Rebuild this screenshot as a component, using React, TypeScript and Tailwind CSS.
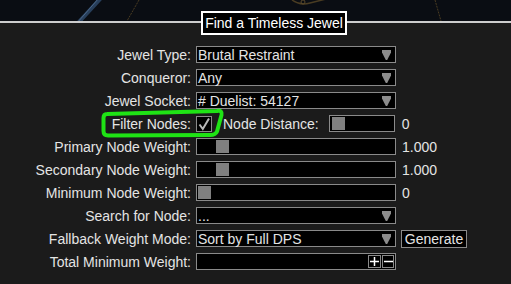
import React from "react";

const font = { fontFamily: '"Liberation Sans", Arial, sans-serif' };

function Arrow() {
  return (
    <svg className="h-[10px] w-[9px] shrink-0" viewBox="0 0 9 10">
      <path d="M0 0 H9 V2.5 L5.2 10 H3.8 L0 2.5 Z" fill="#8c8c8c" />
    </svg>
  );
}

function Label({ children }: { children: React.ReactNode }) {
  return (
    <div className="w-[192px] shrink-0 whitespace-nowrap pr-[1px] text-right leading-none">
      {children}
    </div>
  );
}

function Dropdown({ value }: { value: string }) {
  return (
    <div className="ml-[4px] flex h-[17px] w-[200px] items-center justify-between border border-[#8a8a8a] bg-black pl-[1px] pr-[4px]">
      <span className="whitespace-nowrap leading-none">{value}</span>
      <Arrow />
    </div>
  );
}

function Slider({ offset, width }: { offset: string; width: string }) {
  return (
    <div className={`flex h-[17px] items-center border border-[#8a8a8a] bg-black px-[1px] ${width}`}>
      <div className={`h-[13px] w-[13px] bg-[#808080] ${offset}`} />
    </div>
  );
}

function Row({ children }: { children: React.ReactNode }) {
  return <div className="flex h-[17px] items-center">{children}</div>;
}

export default function App() {
  return (
    <div
      className="relative h-[284px] w-[511px] overflow-hidden bg-[#1b1b1b] text-[14px] text-[#e4e4e4]"
      style={font}
    >
      {/* tree backdrop */}
      <div className="h-[21px] bg-[#0a0d13]">
        <svg className="h-full w-full" viewBox="0 0 511 21">
          <path d="M101 -2 L78 23" stroke="#35557a" strokeWidth="4" opacity="0.7" />
          <path d="M99 -2 L77 23" stroke="#6f8fb8" strokeWidth="1" opacity="0.5" />
          <path d="M139 0 L127 21" stroke="#4a3c22" strokeWidth="1" strokeDasharray="2 1" />
          <path d="M292 0 Q300 6 310 3 Q322 0 330 -2" stroke="#4a3c22" strokeWidth="1.5" fill="none" />
          <circle cx="303" cy="2" r="2" fill="none" stroke="#5a4a2a" strokeWidth="1" />
          <path d="M435 0 L441 21" stroke="#4a3c22" strokeWidth="1" strokeDasharray="2 1" />
        </svg>
      </div>
      <div className="h-[2px] bg-[#cdcdcd]" />

      <div className="absolute left-[201px] top-[11px] flex h-[24px] w-[146px] items-center justify-center border-2 border-white bg-black leading-none text-white">
        Find a Timeless Jewel
      </div>

      <div className="flex flex-col gap-[6px] pt-[23px]">
        <Row>
          <Label>Jewel Type:</Label>
          <Dropdown value="Brutal Restraint" />
        </Row>
        <Row>
          <Label>Conqueror:</Label>
          <Dropdown value="Any" />
        </Row>
        <Row>
          <Label>Jewel Socket:</Label>
          <Dropdown value="# Duelist: 54127" />
        </Row>
        <Row>
          <Label>Filter Nodes:</Label>
          <div className="ml-[4px] flex h-[16px] w-[16px] items-center justify-center border border-[#8a8a8a] bg-black">
            <svg className="h-[14px] w-[14px]" viewBox="0 0 14 14">
              <path d="M2.5 7.5 L5.8 12 L12 1.5" stroke="#b8b8b8" strokeWidth="2" fill="none" />
            </svg>
          </div>
          <span className="ml-[11px] whitespace-nowrap leading-none">Node Distance:</span>
          <div className="ml-[10px]">
            <Slider offset="ml-[1px]" width="w-[66px]" />
          </div>
          <span className="ml-[7px] leading-none">0</span>
        </Row>
        <Row>
          <Label>Primary Node Weight:</Label>
          <div className="ml-[4px]">
            <Slider offset="ml-[18px]" width="w-[200px]" />
          </div>
          <span className="ml-[6px] leading-none">1.000</span>
        </Row>
        <Row>
          <Label>Secondary Node Weight:</Label>
          <div className="ml-[4px]">
            <Slider offset="ml-[18px]" width="w-[200px]" />
          </div>
          <span className="ml-[6px] leading-none">1.000</span>
        </Row>
        <Row>
          <Label>Minimum Node Weight:</Label>
          <div className="ml-[4px]">
            <Slider offset="ml-0" width="w-[200px]" />
          </div>
          <span className="ml-[6px] leading-none">0</span>
        </Row>
        <Row>
          <Label>Search for Node:</Label>
          <Dropdown value="..." />
        </Row>
        <Row>
          <Label>Fallback Weight Mode:</Label>
          <Dropdown value="Sort by Full DPS" />
          <button
            type="button"
            className="ml-[5px] flex h-[18px] w-[66px] items-center justify-center border border-[#8a8a8a] bg-black leading-none text-[#e4e4e4]"
          >
            Generate
          </button>
        </Row>
        <Row>
          <Label>Total Minimum Weight:</Label>
          <div className="ml-[4px] flex h-[17px] w-[200px] items-center justify-end gap-[1px] border border-[#8a8a8a] bg-black pr-[1px]">
            <div className="flex h-[13px] w-[13px] items-center justify-center border border-[#8a8a8a]">
              <svg className="h-[9px] w-[9px]" viewBox="0 0 9 9">
                <path d="M4.5 0 V9 M0 4.5 H9" stroke="#ffffff" strokeWidth="1.5" />
              </svg>
            </div>
            <div className="flex h-[13px] w-[12px] items-center justify-center border border-[#8a8a8a]">
              <svg className="h-[9px] w-[9px]" viewBox="0 0 9 9">
                <path d="M0 4.5 H9" stroke="#ffffff" strokeWidth="1.5" />
              </svg>
            </div>
          </div>
        </Row>
      </div>

      {/* hand-drawn highlight around Filter Nodes */}
      <svg className="pointer-events-none absolute left-0 top-0 h-[284px] w-[511px]" viewBox="0 0 511 284">
        <path
          d="M107 114 L217 111 Q222.5 110 221.5 115 L217 131.5 Q215.5 135 210 135 L108 135.5 Q103.5 135.5 103.5 131 L103.5 118 Q103.5 114 107 114 Z"
          fill="none"
          stroke="#1fe315"
          strokeWidth="4"
          strokeLinejoin="round"
        />
      </svg>
    </div>
  );
}
